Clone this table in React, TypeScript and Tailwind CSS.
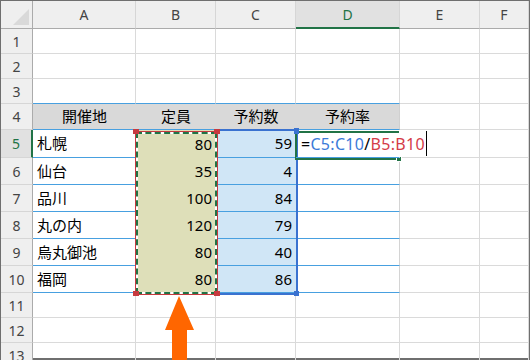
import React from "react";

const FONT = { fontFamily: '"Noto Sans", "Noto Sans CJK JP", sans-serif' };

const rows = [
  { name: "札幌", cap: 80, booked: 59 },
  { name: "仙台", cap: 35, booked: 4 },
  { name: "品川", cap: 100, booked: 84 },
  { name: "丸の内", cap: 120, booked: 79 },
  { name: "烏丸御池", cap: 80, booked: 40 },
  { name: "福岡", cap: 80, booked: 86 },
];

const colHead =
  "flex items-center justify-center bg-[#efefef] border-r border-r-[#d6d6d6] border-b border-b-[#ababab] text-[14px] text-[#444]";
const colHeadSel =
  "flex items-center justify-center bg-[#e1e1e1] border-r border-r-[#d6d6d6] border-b-2 border-b-[#217346] text-[14px] text-[#217346]";
const rowHead =
  "flex items-center justify-center bg-[#efefef] border-r border-r-[#ababab] border-b border-b-[#d6d6d6] text-[14px] text-[#444]";
const rowHeadSel =
  "flex items-center justify-center bg-[#e1e1e1] border-r-2 border-r-[#217346] border-b border-b-[#d6d6d6] text-[14px] text-[#217346]";
const cell = "border-r border-b border-[#dadada]";
const cellBlueBottom = "border-r border-r-[#dadada] border-b border-b-[#48a0e0]";

function EmptyRow({ n, blueBottom }: { n: number; blueBottom?: boolean }) {
  const t = blueBottom ? cellBlueBottom : cell;
  return (
    <>
      <div className={rowHead}>{n}</div>
      <div className={t} />
      <div className={t} />
      <div className={t} />
      <div className={t} />
      <div className={cell} />
      <div className={cell} />
    </>
  );
}

export default function App() {
  return (
    <div className="relative w-[530px] h-[360px] overflow-hidden bg-white text-black" style={FONT}>
      <div className="w-full h-full border border-b-2 border-[#6f6f6f]">
        <div className="grid grid-cols-[32px_103px_80px_80px_104px_80px_1fr] grid-rows-[28px_25px_25px_25px_26px_28px_27px_27px_27px_27px_27px_25px_25px_25px]">
          {/* column headers */}
          <div className="flex items-end justify-end bg-[#efefef] border-r border-r-[#ababab] border-b border-b-[#ababab] pr-[3px] pb-[3px]">
            <svg width="16" height="16" viewBox="0 0 16 16">
              <polygon points="0,16 16,16 16,0" fill="#d9d9d9" />
            </svg>
          </div>
          <div className={colHead}>A</div>
          <div className={colHead}>B</div>
          <div className={colHead}>C</div>
          <div className={colHeadSel}>D</div>
          <div className={colHead}>E</div>
          <div className={colHead}>F</div>

          <EmptyRow n={1} />
          <EmptyRow n={2} />
          <EmptyRow n={3} blueBottom />

          {/* table header */}
          <div className={rowHead}>4</div>
          <div className="flex items-center justify-center bg-[#d9d9d9] border-b border-b-[#48a0e0] text-[15px]">開催地</div>
          <div className="flex items-center justify-center bg-[#d9d9d9] border-b border-b-[#48a0e0] text-[15px]">定員</div>
          <div className="flex items-center justify-center bg-[#d9d9d9] border-b border-b-[#48a0e0] text-[15px]">予約数</div>
          <div className="flex items-center justify-center bg-[#d9d9d9] border-r border-r-[#d0d0d0] border-b border-b-[#48a0e0] text-[15px]">予約率</div>
          <div className={cell} />
          <div className={cell} />

          {rows.map((r, i) => (
            <React.Fragment key={r.name}>
              <div className={i === 0 ? rowHeadSel : rowHead}>{i + 5}</div>
              <div className="flex items-center pl-[4px] border-b border-b-[#48a0e0] text-[15px]">{r.name}</div>
              <div className="flex items-center justify-end pr-[4px] bg-[#dedfb9] text-[15px]">{r.cap}</div>
              <div className="flex items-center justify-end pr-[4px] bg-[#d0e6f6] border-b border-b-[#48a0e0] text-[15px]">{r.booked}</div>
              {i === 0 ? (
                <div className="relative z-10 flex items-center pl-[5px] border-r border-r-white border-b border-b-[#48a0e0] text-[16px] tracking-[0.3px] whitespace-nowrap overflow-visible">
                  <span className="flex items-center">
                    <span>=</span>
                    <span className="text-[#3c7ad8]">C5:C10</span>
                    <span>/</span>
                    <span className="text-[#d43c48]">B5:B10</span>
                    <span className="inline-block w-px h-[25px] bg-black ml-[1px]" />
                  </span>
                </div>
              ) : (
                <div className="border-r border-r-[#d4d4d4] border-b border-b-[#48a0e0]" />
              )}
              <div className={cell} />
              <div className={cell} />
            </React.Fragment>
          ))}

          <EmptyRow n={11} />
          <EmptyRow n={12} />
          <EmptyRow n={13} />
        </div>
      </div>

      {/* reference range C5:C10 */}
      <div className="absolute left-[215px] top-[129px] w-[83px] h-[166px] border-2 border-[#3a72d0] pointer-events-none" />
      <div className="absolute left-[294px] top-[128px] w-[5px] h-[5px] bg-[#3a72d0]" />
      <div className="absolute left-[294px] top-[291px] w-[5px] h-[5px] bg-[#3a72d0]" />

      {/* reference range B5:B10 with marching ants */}
      <div className="absolute left-[135px] top-[131px] w-[83px] h-[164px] border border-[#c73a3f] pointer-events-none">
        <div className="absolute inset-0 border-2 border-white" />
        <div className="absolute inset-0 border-2 border-dashed border-[#217346]" />
      </div>
      <div className="absolute left-[133px] top-[129px] w-[6px] h-[5px] bg-[#c73a3f]" />
      <div className="absolute left-[214px] top-[129px] w-[6px] h-[5px] bg-[#c73a3f]" />
      <div className="absolute left-[133px] top-[291px] w-[6px] h-[5px] bg-[#c73a3f]" />
      <div className="absolute left-[214px] top-[291px] w-[6px] h-[5px] bg-[#c73a3f]" />

      {/* active cell D5 in edit mode: open on the right */}
      <div className="absolute left-[295px] top-[131px] w-[105px] h-[29px] border-2 border-r-0 border-[#217346] pointer-events-none" />
      <div className="absolute left-[294px] top-[129px] w-[5px] h-[5px] bg-[#3a72d0]" />
      <div className="absolute left-[396px] top-[156px] w-[6px] h-[6px] bg-[#217346] border border-white" />

      {/* arrow */}
      <svg className="absolute left-[160px] top-[290px]" width="40" height="70" viewBox="0 0 40 70">
        <polygon points="19,6 34,40 27,40 27,70 12,70 12,40 5,40" fill="#ff6600" />
      </svg>
    </div>
  );
}
